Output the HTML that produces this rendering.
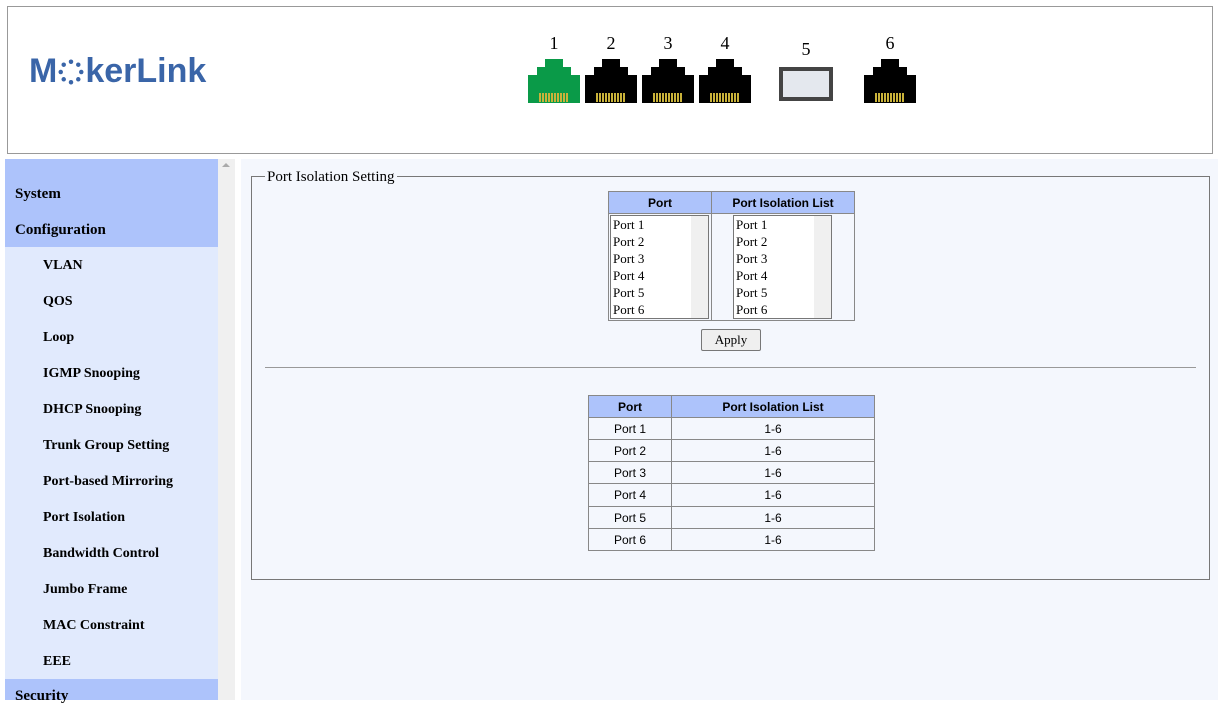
<!DOCTYPE html>
<html><head><meta charset="utf-8"><style>
*{box-sizing:border-box;margin:0;padding:0}
body{width:1218px;height:700px;overflow:hidden;background:#fff;position:relative;font-family:"Liberation Serif",serif}
.a{position:absolute}
.hdr{left:7px;top:6px;width:1206px;height:148px;border:1px solid #999;background:#fff}
.logo{left:29px;top:52px;font:bold 34px "Liberation Sans",sans-serif;color:#3a65a8;letter-spacing:0px}
.num{font-size:18px;color:#000;width:20px;text-align:center}
.side{left:5px;top:159px;width:213px;height:541px;background:#e1eafd}
.sb{left:218px;top:159px;width:17px;height:541px;background:#f0f0f0}
.main{left:241px;top:159px;width:977px;height:541px;background:#f4f7fd}
.blue{background:#adc3fb}
.mi{position:absolute;font-weight:bold;font-size:14px;color:#000}
.top{font-size:15px;left:10px}
fieldset{position:absolute;left:251px;top:168px;width:959px;height:412px;border:1px solid #777}
legend{font-size:15px;margin-left:13px;padding:0 2px;color:#000;position:relative;top:1px}
table{border-collapse:collapse;font-family:"Liberation Sans",sans-serif;font-size:12px;position:absolute}
td,th{border:1px solid #888}
th{background:#adc3fb;font-weight:bold;height:22px}
.lb{position:absolute;border:1px solid #777;background:#fff;width:99px;height:104px;font-size:13px;line-height:17px;padding-left:2px}
.lb .s{position:absolute;right:0;top:0;width:17px;height:102px;background:#f0f0f0}
</style></head><body>
<div class="a hdr"></div>
<div class="a logo">M<span style="display:inline-block;width:28px;position:relative;height:24px;vertical-align:-2px">
<svg width="28" height="28" style="position:absolute;left:0;top:-2px" viewBox="0 0 30 30"><g fill="#3a65a8">
<circle cx="15" cy="4" r="2.4"/><circle cx="22.8" cy="7.2" r="2.4"/><circle cx="26" cy="15" r="2.4"/><circle cx="22.8" cy="22.8" r="2.4"/><circle cx="15" cy="26" r="2.4"/><circle cx="7.2" cy="22.8" r="2.4"/><circle cx="4" cy="15" r="2.4"/><circle cx="7.2" cy="7.2" r="2.4"/></g></svg></span>kerLink</div>
<div class="a num" style="left:544px;top:33px">1</div>
<div class="a num" style="left:601px;top:33px">2</div>
<div class="a num" style="left:658px;top:33px">3</div>
<div class="a num" style="left:715px;top:33px">4</div>
<div class="a num" style="left:796px;top:39px">5</div>
<div class="a num" style="left:880px;top:33px">6</div>
<svg class="a" style="left:0;top:0" width="1218" height="160">
<defs><g id="rj"><path d="M17 0H35V8H43V16H52V44H0V16H9V8H17Z"/><g fill="#c9b23a"><rect x="11" y="34" width="2" height="9"/><rect x="14" y="34" width="2" height="9"/><rect x="17" y="34" width="2" height="9"/><rect x="20" y="34" width="2" height="9"/><rect x="23" y="34" width="2" height="9"/><rect x="26" y="34" width="2" height="9"/><rect x="29" y="34" width="2" height="9"/><rect x="32" y="34" width="2" height="9"/><rect x="35" y="34" width="2" height="9"/><rect x="38" y="34" width="2" height="9"/></g></g></defs>
<use href="#rj" x="528" y="59" fill="#0a9a48"/>
<use href="#rj" x="585" y="59" fill="#000"/>
<use href="#rj" x="642" y="59" fill="#000"/>
<use href="#rj" x="699" y="59" fill="#000"/>
<use href="#rj" x="864" y="59" fill="#000"/>
<rect x="781" y="69" width="50" height="30" fill="#e4e8ee" stroke="#444" stroke-width="4"/>
</svg>
<div class="a side"></div>
<div class="a blue" style="left:5px;top:159px;width:213px;height:88px"></div>
<div class="a blue" style="left:5px;top:679px;width:213px;height:21px"></div>
<div class="a sb"></div>
<div class="a" style="left:222px;top:163px;width:0;height:0;border:4px solid transparent;border-bottom:4px solid #aaa;border-top:0"></div>
<div class="a main"></div>
<div class="mi top" style="top:186px;left:15px">System</div>
<div class="mi top" style="top:222px;left:15px">Configuration</div>
<div class="mi" style="top:258px;left:43px">VLAN</div>
<div class="mi" style="top:294px;left:43px">QOS</div>
<div class="mi" style="top:330px;left:43px">Loop</div>
<div class="mi" style="top:366px;left:43px">IGMP Snooping</div>
<div class="mi" style="top:402px;left:43px">DHCP Snooping</div>
<div class="mi" style="top:438px;left:43px">Trunk Group Setting</div>
<div class="mi" style="top:474px;left:43px">Port-based Mirroring</div>
<div class="mi" style="top:510px;left:43px">Port Isolation</div>
<div class="mi" style="top:546px;left:43px">Bandwidth Control</div>
<div class="mi" style="top:582px;left:43px">Jumbo Frame</div>
<div class="mi" style="top:618px;left:43px">MAC Constraint</div>
<div class="mi" style="top:654px;left:43px">EEE</div>
<div class="mi top" style="top:688px;left:15px">Security</div>
<fieldset><legend>Port Isolation Setting</legend></fieldset>
<table style="left:608px;top:191px;width:247px">
<tr><th style="width:103px">Port</th><th>Port Isolation List</th></tr>
<tr><td style="height:107px"></td><td></td></tr></table>
<div class="lb" style="left:610px;top:215px">Port 1<br>Port 2<br>Port 3<br>Port 4<br>Port 5<br>Port 6<div class="s"></div></div>
<div class="lb" style="left:733px;top:215px">Port 1<br>Port 2<br>Port 3<br>Port 4<br>Port 5<br>Port 6<div class="s"></div></div>
<div class="a" style="left:701px;top:329px;width:60px;height:22px;border:1px solid #777;border-radius:2px;background:#efefef;font-size:13px;text-align:center;line-height:20px">Apply</div>
<div class="a" style="left:265px;top:367px;width:931px;height:1px;background:#999"></div>
<table style="left:588px;top:395px;width:287px;text-align:center">
<tr><th style="width:83px">Port</th><th>Port Isolation List</th></tr>
<tr><td style="height:22px">Port 1</td><td>1-6</td></tr>
<tr><td style="height:22px">Port 2</td><td>1-6</td></tr>
<tr><td style="height:22px">Port 3</td><td>1-6</td></tr>
<tr><td style="height:23px">Port 4</td><td>1-6</td></tr>
<tr><td style="height:22px">Port 5</td><td>1-6</td></tr>
<tr><td style="height:22px">Port 6</td><td>1-6</td></tr>
</table>
</body></html>
